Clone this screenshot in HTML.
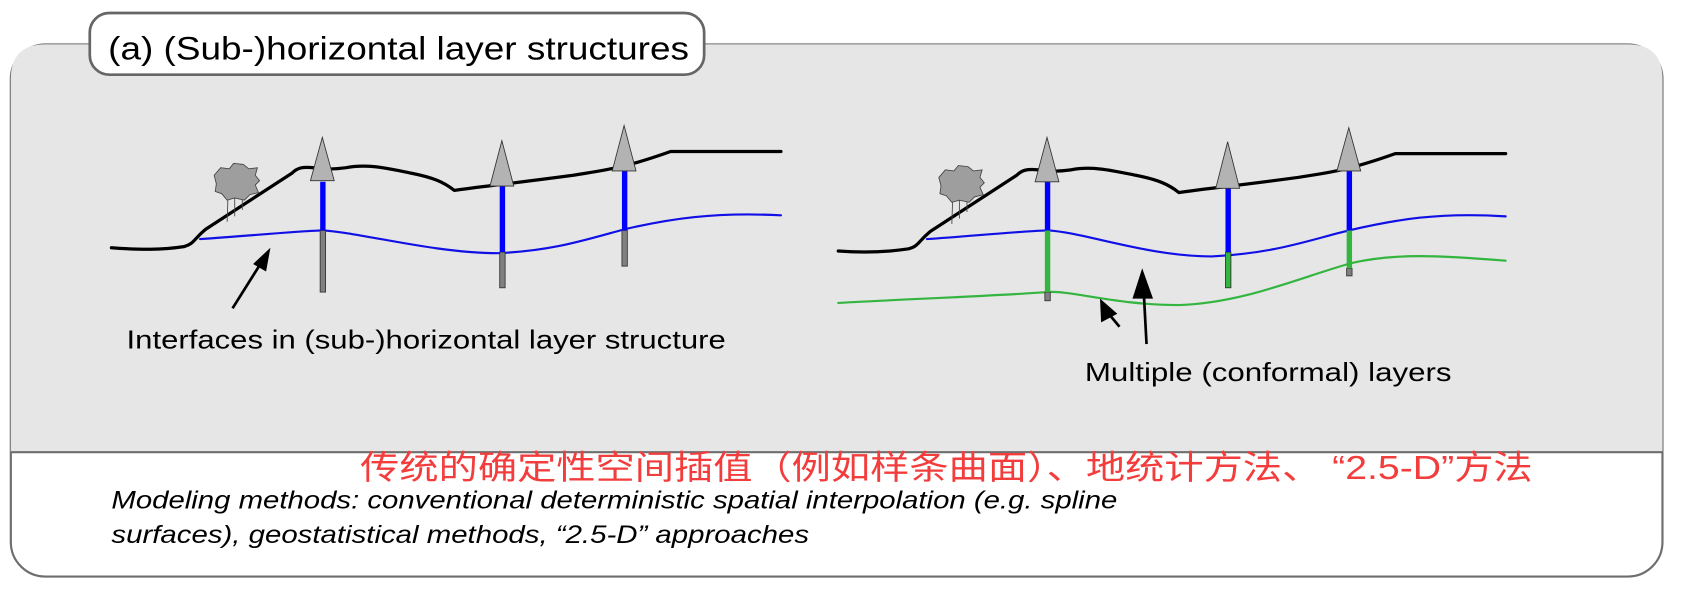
<!DOCTYPE html>
<html><head><meta charset="utf-8"><style>
html,body{margin:0;padding:0;background:#fff;}
svg{display:block;}
</style></head><body>
<svg width="1696" height="595" viewBox="0 0 1568 550" xmlns="http://www.w3.org/2000/svg">
<rect x="10" y="41" width="1527" height="492" rx="32" fill="#fff" stroke="#6e6e6e" stroke-width="2"/>
<path d="M10,418 V73 Q10,41 42,41 H1505 Q1537,41 1537,73 V418 Z" fill="#e6e6e6"/>
<line x1="10" y1="418" x2="1537" y2="418" stroke="#6e6e6e" stroke-width="2"/>
<rect x="83" y="12" width="568" height="57" rx="18" fill="#fff" stroke="#666" stroke-width="2.5"/>
<text x="100" y="55" font-family="Liberation Sans, sans-serif" font-size="30" textLength="537" lengthAdjust="spacingAndGlyphs">(a) (Sub-)horizontal layer structures</text>

<g fill="none" stroke-linejoin="round" stroke-linecap="round">
<path d="M103,229 C130,231 150,231 170,228 C180,225 178,222 190,212 L270,160 C275,155 280,154 290,155 C300,156 305,157 320,155 C340,151 360,156 380,160 C400,164 410,168 420,176 C440,173 470,170 530,162 C560,157 575,156 620,140 L650,140 L722,140" stroke="#000" stroke-width="3"/>
<path d="M185,221 C230,218 270,214 297,213 C330,214 400,234 460,234 C510,232 540,222 577,212 C620,202 660,196 722,199" stroke="#1010e6" stroke-width="2"/>
</g>
<g stroke="#333" stroke-width="0.8">
<rect x="296" y="213" width="5" height="57" fill="#808080"/>
<rect x="462" y="233" width="5" height="33" fill="#808080"/>
<rect x="575" y="213" width="5" height="33" fill="#808080"/>
<rect x="296" y="168" width="5" height="45" fill="#0000ff" stroke="none"/>
<rect x="462" y="172" width="5" height="61" fill="#0000ff" stroke="none"/>
<rect x="575" y="158" width="5" height="55" fill="#0000ff" stroke="none"/>
<polygon points="298,127 287,167 309,167" fill="#b3b3b3"/>
<polygon points="464,130 453,172 475,172" fill="#b3b3b3"/>
<polygon points="577,116 566,158 588,158" fill="#b3b3b3"/>
</g>
<g stroke="#444" stroke-width="0.8">
<line x1="211" y1="175" x2="210" y2="205"/>
<line x1="217" y1="175" x2="217" y2="200"/><line x1="224" y1="175" x2="224" y2="194"/>
<path d="M198,162 l6,-7 l8,1 l4,-5 l9,1 l5,4 l8,-1 l-2,7 l4,5 l-4,4 l3,7 l-8,2 l-5,5 l-9,-2 l-7,2 l-5,-6 l-6,-2 l1,-7 z" fill="#9e9e9e"/>
</g>
<g stroke="#000" stroke-width="2.5" fill="#000">
<line x1="215" y1="285" x2="242" y2="242"/>
<polygon points="250,229 234,244 246,251" stroke="none"/>
</g>
<text x="117" y="322" font-family="Liberation Sans, sans-serif" font-size="24" textLength="554" lengthAdjust="spacingAndGlyphs">Interfaces in (sub-)horizontal layer structure</text>

<g fill="none" stroke-linejoin="round" stroke-linecap="round">
<path d="M775,232 C800,234 820,233 840,230 C850,227 848,224 860,214 L940,162 C945,157 950,156 960,157 C970,158 975,159 990,157 C1010,153 1030,158 1050,162 C1070,166 1080,170 1090,178 C1110,175 1140,172 1200,164 C1230,159 1245,158 1290,142 L1320,142 L1392,142" stroke="#000" stroke-width="3"/>
<path d="M857,221 C900,218 940,214 968,213 C1000,214 1060,237 1120,237 C1180,234 1210,222 1247,213 C1290,203 1330,196 1392,200" stroke="#1010e6" stroke-width="2"/>
<path d="M775,280 C850,276 930,273 968,270 C990,268 1030,282 1090,282 C1150,280 1200,257 1250,243 C1290,234 1330,236 1392,241" stroke="#33b540" stroke-width="2"/>
</g>
<g stroke="#333" stroke-width="0.8">
<rect x="966" y="270" width="5" height="8" fill="#808080"/>
<rect x="1245" y="248" width="5" height="7" fill="#808080"/>
<rect x="966" y="213" width="5" height="57" fill="#33b540" stroke="none"/>
<rect x="1133" y="233" width="5" height="33" fill="#33b540"/>
<rect x="1245" y="213" width="5" height="35" fill="#33b540" stroke="none"/>
<rect x="966" y="168" width="5" height="45" fill="#0000ff" stroke="none"/>
<rect x="1133" y="174" width="5" height="59" fill="#0000ff" stroke="none"/>
<rect x="1245" y="158" width="5" height="55" fill="#0000ff" stroke="none"/>
<polygon points="968,127 957,168 979,168" fill="#b3b3b3"/>
<polygon points="1135,131 1124,174 1146,174" fill="#b3b3b3"/>
<polygon points="1247,118 1236,158 1258,158" fill="#b3b3b3"/>
</g>
<g stroke="#444" stroke-width="0.8">
<line x1="881" y1="177" x2="880" y2="207"/>
<line x1="887" y1="177" x2="887" y2="202"/><line x1="894" y1="177" x2="894" y2="196"/>
<path d="M868,164 l6,-7 l8,1 l4,-5 l9,1 l5,4 l8,-1 l-2,7 l4,5 l-4,4 l3,7 l-8,2 l-5,5 l-9,-2 l-7,2 l-5,-6 l-6,-2 l1,-7 z" fill="#9e9e9e"/>
</g>
<g stroke="#000" stroke-width="2.5" fill="#000">
<line x1="1060" y1="318" x2="1057" y2="262"/>
<polygon points="1056,248 1047,276 1066,276" stroke="none"/>
<line x1="1035" y1="302" x2="1025" y2="290"/>
<polygon points="1017,276 1018,298 1033,290" stroke="none"/>
</g>
<text x="1003" y="352" font-family="Liberation Sans, sans-serif" font-size="24" textLength="339" lengthAdjust="spacingAndGlyphs">Multiple (conformal) layers</text>

<text x="333" y="443" fill="#f33d3d" font-family="Liberation Sans, 'Noto Sans CJK SC', sans-serif" font-size="31" textLength="1084" lengthAdjust="spacingAndGlyphs">传统的确定性空间插值（例如样条曲面）、地统计方法、 “2.5-D”方法</text>
<text x="103" y="470" font-style="italic" font-family="Liberation Sans, sans-serif" font-size="23" textLength="930" lengthAdjust="spacingAndGlyphs">Modeling methods: conventional deterministic spatial interpolation (e.g. spline</text>
<text x="103" y="502" font-style="italic" font-family="Liberation Sans, sans-serif" font-size="23" textLength="645" lengthAdjust="spacingAndGlyphs">surfaces), geostatistical methods, “2.5-D” approaches</text>
</svg>
</body></html>
